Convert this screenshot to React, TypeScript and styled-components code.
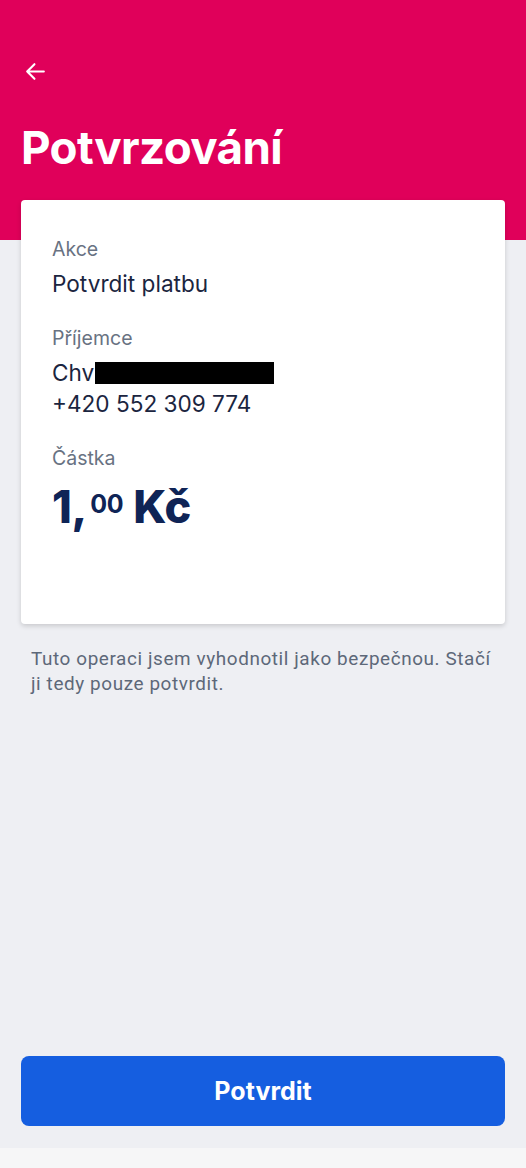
import React from "react";
import styled, { createGlobalStyle } from "styled-components";

const Global = createGlobalStyle`
  html, body { margin: 0; padding: 0; }
  body {
    font-family: Inter, Roboto, "Noto Sans", sans-serif;
    background: #eeeff3;
  }
`;

const Page = styled.div`
  width: 526px;
  height: 1168px;
  display: flex;
  flex-direction: column;
  background: #eeeff3;
  overflow: hidden;
`;

const Header = styled.header`
  display: flex;
  flex-direction: column;
  padding: 56px 21px 0 21px;
  height: 240px;
  flex-shrink: 0;
  box-sizing: border-box;
  background: #e0005a;
`;

const BackButton = styled.button`
  width: 32px;
  height: 30px;
  padding: 0;
  margin: 0 0 0 2px;
  border: none;
  background: transparent;
  display: flex;
  align-items: center;
  justify-content: flex-start;
  cursor: pointer;
`;

const Title = styled.h1`
  margin: 34px 0 0 0;
  font-family: Inter, Roboto, sans-serif;
  font-weight: 700;
  font-size: 45.7px;
  line-height: 56px;
  letter-spacing: -0.6px;
  color: #ffffff;
`;

const Card = styled.section`
  margin: -40px 21px 0 21px;
  height: 424px;
  flex-shrink: 0;
  box-sizing: border-box;
  background: #ffffff;
  border-radius: 4px;
  box-shadow: 0 2px 5px rgba(0, 0, 0, 0.16);
  padding: 34px 31px 0 31px;
  display: flex;
  flex-direction: column;
  position: relative;
`;

const Field = styled.div<{ $gap?: number }>`
  display: flex;
  flex-direction: column;
  margin-bottom: ${(p) => p.$gap ?? 24}px;
`;

const Label = styled.div`
  font-size: 19.5px;
  line-height: 30px;
  color: #687282;
`;

const Value = styled.div<{ $first?: boolean }>`
  margin-top: ${(p) => (p.$first ? 4 : 0)}px;
  font-size: 22.6px;
  line-height: 31px;
  color: #1b2540;
  display: flex;
  align-items: center;
`;

const Redacted = styled.span`
  display: inline-block;
  width: 179px;
  height: 22px;
  background: #000;
  margin-left: 1px;
`;

const Amount = styled.div`
  margin-top: 7px;
  font-family: Inter, Roboto, sans-serif;
  font-weight: 800;
  font-size: 45px;
  line-height: 54px;
  color: #0f2456;
  letter-spacing: -0.3px;
`;

const Sup = styled.sup`
  font-size: 25px;
  font-weight: 700;
  vertical-align: top;
  position: relative;
  top: -3px;
  margin-left: 3px;
  margin-right: 10px;
`;

const Note = styled.p`
  margin: 22px 24px 0 31px;
  font-family: Roboto, Inter, sans-serif;
  font-size: 18.9px;
  letter-spacing: 0.6px;
  line-height: 25px;
  color: #5d6879;
`;

const Spacer = styled.div`
  flex: 1;
`;

const PrimaryButton = styled.button`
  margin: 0 21px;
  height: 70px;
  flex-shrink: 0;
  border: none;
  border-radius: 8px;
  background: #155ee0;
  color: #ffffff;
  font-family: Inter, Roboto, sans-serif;
  font-weight: 700;
  font-size: 25px;
  cursor: pointer;
`;

const BottomBar = styled.div`
  margin-top: 22px;
  height: 20px;
  flex-shrink: 0;
  background: #f6f6f7;
`;

export default function App() {
  return (
    <>
      <Global />
      <Page>
        <Header>
          <BackButton aria-label="Zpět">
            <svg width="25" height="25" viewBox="0 0 24 24" fill="none">
              <path
                d="M20 12H4M11 5l-7 7 7 7"
                stroke="#ffffff"
                strokeWidth="2"
                strokeLinecap="round"
                strokeLinejoin="round"
              />
            </svg>
          </BackButton>
          <Title>Potvrzování</Title>
        </Header>
        <Card>
          <Field>
            <Label>Akce</Label>
            <Value $first>Potvrdit platbu</Value>
          </Field>
          <Field>
            <Label>Příjemce</Label>
            <Value $first>
              Chv<Redacted />
            </Value>
            <Value>+420 552 309 774</Value>
          </Field>
          <Field $gap={0}>
            <Label>Částka</Label>
            <Amount>
              1,<Sup>00</Sup>Kč
            </Amount>
          </Field>
        </Card>
        <Note>
          Tuto operaci jsem vyhodnotil jako bezpečnou. Stačí ji tedy pouze
          potvrdit.
        </Note>
        <Spacer />
        <PrimaryButton>Potvrdit</PrimaryButton>
        <BottomBar />
      </Page>
    </>
  );
}
